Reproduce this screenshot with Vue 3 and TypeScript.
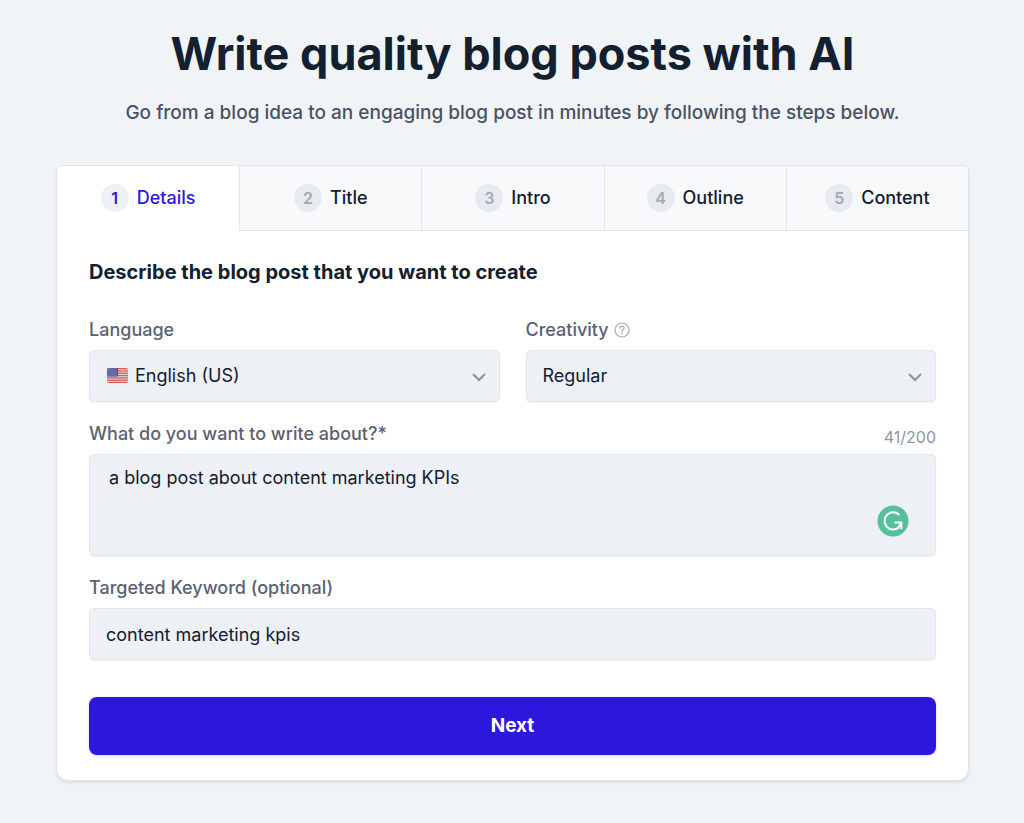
<script setup lang="ts">
import { computed, ref } from 'vue'

interface Step {
  id: number
  label: string
}

const steps: Step[] = [
  { id: 1, label: 'Details' },
  { id: 2, label: 'Title' },
  { id: 3, label: 'Intro' },
  { id: 4, label: 'Outline' },
  { id: 5, label: 'Content' },
]

const maxLength = 200
const activeStep = ref(1)
const language = ref('en-US')
const creativity = ref('regular')
const topic = ref('a blog post about content marketing KPIs ')
const keyword = ref('content marketing kpis')

const counter = computed(() => `${topic.value.length}/${maxLength}`)
const stripes = [0, 2, 4, 6, 8, 10, 12]
const starRows = [1, 3, 5, 7]
const starColumns = [1, 3, 5, 7, 9]

function next(): void {
  if (activeStep.value < steps.length) activeStep.value += 1
}
</script>

<template>
  <main class="page">
    <header class="intro">
      <h1>Write quality blog posts with AI</h1>
      <p>Go from a blog idea to an engaging blog post in minutes by following the steps below.</p>
    </header>

    <section class="card">
      <nav class="steps" aria-label="Steps">
        <button
          v-for="step in steps"
          :key="step.id"
          type="button"
          class="step"
          :class="{ active: step.id === activeStep }"
          @click="activeStep = step.id"
        >
          <span class="number">{{ step.id }}</span>
          <span>{{ step.label }}</span>
        </button>
      </nav>

      <form class="panel" @submit.prevent="next">
        <h2>Describe the blog post that you want to create</h2>

        <div class="fields">
          <div class="row">
            <div class="field">
              <div class="label-row"><label for="language">Language</label></div>
              <div class="select-wrap">
                <select id="language" v-model="language" class="control with-flag">
                  <option value="en-US">English (US)</option>
                </select>
                <svg class="flag" viewBox="0 0 21 15" aria-hidden="true">
                  <clipPath id="flag-shape"><rect width="21" height="15" rx="2" /></clipPath>
                  <g clip-path="url(#flag-shape)">
                    <rect width="21" height="15" fill="#dedade" />
                    <rect
                      v-for="n in stripes"
                      :key="n"
                      :y="(n * 15) / 13"
                      width="21"
                      height="1.25"
                      fill="#dc5850"
                    />
                    <rect width="11" height="8.5" fill="#4a4f9c" />
                    <template v-for="y in starRows" :key="y">
                      <circle v-for="x in starColumns" :key="x" :cx="x" :cy="y" r="0.6" fill="#c9cce0" />
                    </template>
                  </g>
                </svg>
                <svg class="chevron" viewBox="0 0 14 10" aria-hidden="true">
                  <path d="M1 2l6 6 6-6" />
                </svg>
              </div>
            </div>

            <div class="field">
              <div class="label-row">
                <label for="creativity">Creativity</label>
                <svg class="help" viewBox="0 0 16 16" aria-hidden="true">
                  <circle cx="8" cy="8" r="7" />
                  <path d="M5.9 6.3c0-1.3.9-2.1 2.1-2.1s2.1.8 2.1 1.9c0 1.5-2.1 1.6-2.1 3.1" />
                  <path d="M8 11v1" />
                </svg>
              </div>
              <div class="select-wrap">
                <select id="creativity" v-model="creativity" class="control">
                  <option value="regular">Regular</option>
                </select>
                <svg class="chevron" viewBox="0 0 14 10" aria-hidden="true">
                  <path d="M1 2l6 6 6-6" />
                </svg>
              </div>
            </div>
          </div>

          <div class="field">
            <div class="label-row spread">
              <label for="topic">What do you want to write about?*</label>
              <span class="counter">{{ counter }}</span>
            </div>
            <div class="topic-wrap">
              <textarea
                id="topic"
                v-model="topic"
                class="control topic"
                :maxlength="maxLength"
                spellcheck="false"
              ></textarea>
              <svg class="assistant" viewBox="0 0 32 32" aria-hidden="true">
                <circle cx="16" cy="16" r="15.5" />
                <path d="M22.4 10A8.6 8.6 0 1 0 21.6 22.6" />
                <path d="M17.3 17.6h7v6.6" />
                <path d="M20.6 23.6l3.7-5.6" />
              </svg>
            </div>
          </div>

          <div class="field">
            <div class="label-row"><label for="keyword">Targeted Keyword (optional)</label></div>
            <input id="keyword" v-model="keyword" class="control" type="text" />
          </div>
        </div>

        <button class="next" type="submit">Next</button>
      </form>
    </section>
  </main>
</template>

<style>
body {
  margin: 0;
  background: #f0f4f7;
}
</style>

<style scoped>
.page {
  box-sizing: border-box;
  max-width: 1024px;
  margin: 0 auto;
  padding: 24px 55px 42px 56px;
  font-family: Inter, 'Liberation Sans', sans-serif;
  font-size: 18px;
  line-height: 24px;
  color: #12202f;
}

.page * {
  box-sizing: border-box;
}

.intro {
  text-align: center;
}

h1 {
  margin: 0;
  font-size: 45px;
  line-height: 60px;
  font-weight: 700;
}

.intro p {
  margin: 14px 0 37px;
  font-size: 19px;
  line-height: 30px;
  font-weight: 500;
  color: #4a5264;
}

.card {
  border: 1px solid #e2e6ec;
  border-radius: 5px 5px 12px 12px;
  background: #fff;
  box-shadow: 0 2px 3px rgba(20, 35, 55, 0.1);
}

.steps {
  display: grid;
  grid-template-columns: repeat(5, 1fr);
}

.step {
  display: flex;
  align-items: center;
  justify-content: center;
  gap: 8px;
  height: 65px;
  padding: 0;
  border: 0;
  border-left: 1px solid #e2e6ec;
  border-bottom: 1px solid #e2e6ec;
  background: #f7f9fb;
  color: #12202f;
  font: inherit;
  font-weight: 500;
}

.step:first-child {
  border-left: 0;
  border-top-left-radius: 4px;
}

.step:last-child {
  border-top-right-radius: 4px;
}

.step.active {
  border-bottom-color: #fff;
  background: #fff;
  color: #2c17de;
}

.number {
  width: 28px;
  height: 28px;
  border-radius: 50%;
  background: #e7ebf0;
  color: #a3aab5;
  font-size: 16px;
  line-height: 28px;
  font-weight: 600;
}

.active .number {
  background: #edf0f5;
  color: #2c17de;
}

.panel {
  padding: 27px 32px 25px;
}

h2 {
  margin: 0 0 32px;
  font-size: 20px;
  line-height: 28px;
  font-weight: 700;
}

.fields {
  display: grid;
  gap: 20px;
}

.row {
  display: grid;
  grid-template-columns: 1fr 1fr;
  gap: 26px;
}

.field {
  display: grid;
  gap: 8px;
}

.label-row {
  display: flex;
  align-items: center;
  gap: 5px;
  height: 24px;
  font-weight: 500;
  color: #596273;
}

.spread {
  justify-content: space-between;
}

.counter {
  align-self: flex-end;
  font-size: 16px;
  line-height: 18px;
  font-weight: 400;
  color: #8c95a3;
}

.help {
  width: 16px;
  height: 16px;
  fill: none;
  stroke: #a4abb7;
  stroke-width: 1.2;
  stroke-linecap: round;
}

.select-wrap,
.topic-wrap {
  position: relative;
  display: grid;
}

.control {
  width: 100%;
  height: 52px;
  margin: 0;
  padding: 0 16px;
  border: 1px solid #e2e6ec;
  border-radius: 5px;
  background: #edf0f5;
  box-shadow: 0 1px 2px rgba(20, 35, 55, 0.06);
  color: #12202f;
  font: inherit;
  appearance: none;
}

.control.with-flag {
  padding-left: 45px;
}

.control.topic {
  height: 102px;
  padding: 11px 19px;
  resize: none;
}

.flag {
  position: absolute;
  left: 18px;
  top: 18px;
  width: 21px;
  height: 15px;
  pointer-events: none;
}

.chevron {
  position: absolute;
  right: 14px;
  top: 22px;
  width: 14px;
  height: 10px;
  fill: none;
  stroke: #8a929f;
  stroke-width: 2;
  pointer-events: none;
}

.assistant {
  position: absolute;
  right: 27px;
  bottom: 19px;
  width: 32px;
  height: 32px;
  fill: none;
  stroke: #fff;
  stroke-width: 2;
}

.assistant circle {
  fill: #57c09b;
  stroke: none;
}

.next {
  display: block;
  width: 100%;
  height: 58px;
  margin-top: 37px;
  padding: 0;
  border: 0;
  border-radius: 8px;
  background: #2c17de;
  box-shadow: 0 1px 3px rgba(44, 23, 222, 0.2);
  color: #fff;
  font: inherit;
  font-size: 19px;
  font-weight: 700;
}
</style>
